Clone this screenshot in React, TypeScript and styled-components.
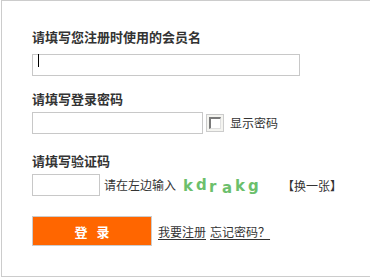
import styled, {createGlobalStyle} from "styled-components";

const GlobalStyle = createGlobalStyle`
  html, body {
    margin: 0;
    padding: 0;
    background: #fff;
    overflow: hidden;
  }

  body {
    font-family: "Noto Sans CJK SC", "DejaVu Sans", sans-serif;
    color: #333;
  }
`;

const captcha = [
  {ch: 'k', dy: 0},
  {ch: 'd', dy: -1},
  {ch: 'r', dy: 1},
  {ch: 'a', dy: 2},
  {ch: 'k', dy: 0},
  {ch: 'g', dy: 0},
];

export default function App() {
  return (
    <>
      <GlobalStyle/>
      <LoginBox>
        <Field>
          <Label>请填写您注册时使用的会员名</Label>
          <CaretWrap>
            <TextInput $width={268}/>
            <Caret/>
          </CaretWrap>
        </Field>

        <Field>
          <Label>请填写登录密码</Label>
          <Row>
            <TextInput $width={171} type="password"/>
            <CheckBox/>
            <Hint $gap={6}>显示密码</Hint>
          </Row>
        </Field>

        <Field>
          <Label>请填写验证码</Label>
          <Row>
            <TextInput $width={68}/>
            <Hint $gap={4}>请在左边输入</Hint>
            <Captcha>
              {captcha.map((c, i) => <CaptchaChar key={i} $dy={c.dy}>{c.ch}</CaptchaChar>)}
            </Captcha>
            <Refresh>【换一张】</Refresh>
          </Row>
        </Field>

        <Actions>
          <SubmitButton>登录</SubmitButton>
          <TextLink href="#">我要注册</TextLink>
          <TextLink href="#">忘记密码？</TextLink>
        </Actions>
      </LoginBox>
    </>
  );
}

const LoginBox = styled.div`
  box-sizing: border-box;
  margin-left: 1px;
  width: 369px;
  height: 277px;
  border: 1px solid #ccc;
  border-right: none;
  padding: 29px 0 0 30px;
  display: flex;
  flex-direction: column;
  gap: 20px;
`;

const Field = styled.div`
  display: flex;
  flex-direction: column;
  gap: 6px;
`;

const Label = styled.div`
  font-size: 13px;
  line-height: 14px;
  font-weight: bold;
  color: #333;
`;

const Row = styled.div`
  display: flex;
  align-items: center;
  height: 22px;
`;

const CaretWrap = styled.div`
  position: relative;
  width: 268px;
  height: 22px;
`;

const Caret = styled.span`
  position: absolute;
  left: 6px;
  top: 4px;
  width: 1px;
  height: 13px;
  background: #000;
`;

const TextInput = styled.input<{ $width: number }>`
  box-sizing: border-box;
  width: ${p => p.$width}px;
  height: 22px;
  margin: 0;
  padding: 0 4px;
  border: 1px solid #c8c8c8;
  outline: none;
  background: #fff;
  font-size: 12px;
`;

const CheckBox = styled.span`
  box-sizing: border-box;
  display: inline-block;
  width: 18px;
  height: 18px;
  margin-left: 3px;
  border: 1px solid #ccc;
  background: #f4f4f0;
  position: relative;

  &::after {
    content: "";
    position: absolute;
    left: 2px;
    top: 2px;
    width: 12px;
    height: 12px;
    box-sizing: border-box;
    background: #fff;
    border-top: 2px solid #7a7a7a;
    border-left: 2px solid #7a7a7a;
    border-right: 1px solid #e0e0e0;
    border-bottom: 1px solid #e0e0e0;
  }
`;

const Hint = styled.span<{ $gap: number }>`
  margin-left: ${p => p.$gap}px;
  font-size: 12px;
  line-height: 14px;
  color: #333;
`;

const Captcha = styled.span`
  display: flex;
  align-items: baseline;
  margin-left: 7px;
  width: 78px;
`;

const CaptchaChar = styled.span<{ $dy: number }>`
  display: inline-block;
  width: 13px;
  font-family: "DejaVu Sans", sans-serif;
  font-weight: bold;
  font-size: 15px;
  color: #6cbf6c;
  transform: translateY(${p => p.$dy + 1}px);
`;

const Refresh = styled.span`
  margin-left: 21px;
  font-size: 12px;
  color: #333;
`;

const Actions = styled.div`
  display: flex;
  align-items: center;
  gap: 4px;
`;

const SubmitButton = styled.button`
  box-sizing: border-box;
  width: 120px;
  height: 30px;
  margin: 0 2px 0 0;
  padding: 0 0 0 9px;
  border: 1px solid #ccc;
  background: #ff6600;
  color: #fff;
  font-family: "Noto Sans CJK SC", sans-serif;
  font-size: 13px;
  font-weight: bold;
  letter-spacing: 9px;
  cursor: pointer;
`;

const TextLink = styled.a`
  font-size: 12px;
  color: #333;
  text-decoration: underline;
  text-underline-offset: 2px;
`;
